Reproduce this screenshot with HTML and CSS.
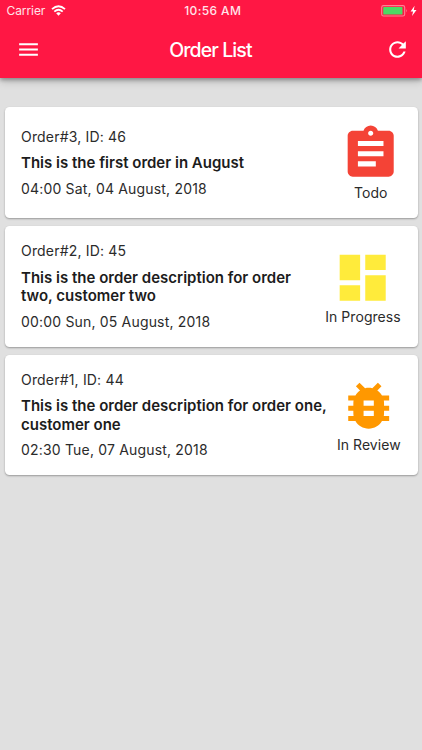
FILE: index.html
```html
<!DOCTYPE html>
<html lang="en">
<head>
<meta charset="utf-8">
<title>Order List</title>
<link rel="stylesheet" href="styles.css">
</head>
<body>
<header class="header">
  <div class="status">
    <div class="carrier"><span>Carrier</span>
      <svg class="wifi" viewBox="0 0 15 11"><path d="M1 4.2Q7.5-1.7 14 4.2M3.3 6.6Q7.5 2.8 11.7 6.6" fill="none" stroke="currentColor" stroke-width="1.8"/><path d="M5.2 8.3Q7.5 6.3 9.8 8.3L7.5 10.7z" fill="currentColor"/></svg>
    </div>
    <span class="time">10:56 AM</span>
    <svg class="battery" viewBox="0 0 37 12"><rect x=".7" y=".6" width="23" height="10.4" rx="1.8" fill="none" stroke="#ff8095" stroke-width="1.1"/><rect x="2.2" y="2.1" width="19.3" height="7.4" rx=".6" fill="#4cd964"/><path d="M25.3 4.1q1.6 1.7 0 3.4z" fill="#ff8095"/><path d="M33.6.7 29.6 6.6h2.5L31 11l4.5-6.1h-2.7z" fill="#fff"/></svg>
  </div>
  <nav class="bar">
    <svg class="nav-icon" viewBox="0 0 24 24"><path d="M3 18h18v-2H3v2zm0-5h18v-2H3v2zm0-7v2h18V6H3z"/></svg>
    <h1 class="title">Order List</h1>
    <svg class="nav-icon" viewBox="0 0 24 24"><path d="M17.65 6.35C16.2 4.9 14.21 4 12 4c-4.42 0-7.99 3.58-7.99 8s3.57 8 7.99 8c3.73 0 6.84-2.55 7.73-6h-2.08c-.82 2.33-3.04 4-5.65 4-3.31 0-6-2.69-6-6s2.69-6 6-6c1.66 0 3.14.69 4.22 1.78L13 11h7V4l-2.35 2.35z"/></svg>
  </nav>
</header>
<main class="list">
  <article class="card card-short">
    <div class="info">
      <p class="meta">Order#3, ID: 46</p>
      <h2 class="desc">This is the first order in August</h2>
      <p class="meta date">04:00 Sat, 04 August, 2018</p>
    </div>
    <div class="state todo">
      <svg class="state-icon" viewBox="0 0 24 24"><path d="M19 3h-4.18C14.4 1.84 13.3 1 12 1c-1.3 0-2.4.84-2.82 2H5c-1.1 0-2 .9-2 2v14c0 1.1.9 2 2 2h14c1.1 0 2-.9 2-2V5c0-1.1-.9-2-2-2zm-7 0c.55 0 1 .45 1 1s-.45 1-1 1-1-.45-1-1 .45-1 1-1zm2 14H7v-2h7v2zm3-4H7v-2h10v2zm0-4H7V7h10v2z"/></svg>
      <span class="label">Todo</span>
    </div>
  </article>
  <article class="card">
    <div class="info">
      <p class="meta">Order#2, ID: 45</p>
      <h2 class="desc">This is the order description for order<br>two, customer two</h2>
      <p class="meta date">00:00 Sun, 05 August, 2018</p>
    </div>
    <div class="state progress">
      <svg class="state-icon" viewBox="0 0 24 24"><path d="M3 13h8V3H3v10zm0 8h8v-6H3v6zm10 0h8V11h-8v10zm0-18v6h8V3h-8z"/></svg>
      <span class="label">In Progress</span>
    </div>
  </article>
  <article class="card">
    <div class="info">
      <p class="meta">Order#1, ID: 44</p>
      <h2 class="desc">This is the order description for order one,<br>customer one</h2>
      <p class="meta date">02:30 Tue, 07 August, 2018</p>
    </div>
    <div class="state review">
      <svg class="state-icon" viewBox="0 0 24 24"><path d="M20 8h-2.81c-.45-.78-1.07-1.45-1.82-1.96L17 4.41 15.59 3l-2.17 2.17C12.96 5.06 12.49 5 12 5c-.49 0-.96.06-1.41.17L8.41 3 7 4.41l1.62 1.63C7.88 6.55 7.26 7.22 6.81 8H4v2h2.09c-.05.33-.09.66-.09 1v1H4v2h2v1c0 .34.04.67.09 1H4v2h2.81c1.04 1.79 2.97 3 5.19 3s4.15-1.21 5.19-3H20v-2h-2.09c.05-.33.09-.66.09-1v-1h2v-2h-2v-1c0-.34-.04-.67-.09-1H20V8zm-6 8h-4v-2h4v2zm0-4h-4v-2h4v2z"/></svg>
      <span class="label">In Review</span>
    </div>
  </article>
</main>
</body>
</html>
```
FILE: styles.css
```css
* { box-sizing: border-box; }
body {
  margin: 0;
  min-height: 750px;
  background: #e0e0e0;
  color: #2b2b2b;
  font-family: Inter, "Liberation Sans", sans-serif;
}
h1, h2, p { margin: 0; }
svg { display: block; flex: none; }
.header {
  height: 77.6px;
  background: #ff1744;
  color: #fff;
  box-shadow: 0 2px 4px rgba(0, 0, 0, .3), 0 3px 9px rgba(0, 0, 0, .18);
}
.status {
  display: grid;
  grid-template-columns: 1fr auto 1fr;
  align-items: center;
  height: 21px;
  padding: 0 4px 0 6.5px;
  color: #ffe4e9;
}
.carrier { display: flex; align-items: center; gap: 6px; font-size: 12px; letter-spacing: -.08px; }
.wifi { width: 15px; height: 11px; color: #fff; }
.time { padding-left: 1px; font-size: 12px; font-weight: 500; letter-spacing: .4px; }
.battery { width: 37px; height: 12px; justify-self: end; }
.bar {
  display: flex;
  align-items: center;
  justify-content: space-between;
  height: 57px;
  padding: 0 12px 0 16px;
}
.nav-icon { width: 25px; height: 25px; fill: #fff; }
.title { margin-right: 5px; font-size: 19.5px; font-weight: 500; letter-spacing: -.9px; }
.list { display: flex; flex-direction: column; gap: 8px; padding: 29.6px 4.5px 0; }
.card {
  display: flex;
  justify-content: space-between;
  align-items: center;
  height: 120.4px;
  padding: 0 16px 0 16.5px;
  border-radius: 4.5px;
  background: #fff;
  box-shadow: 0 1px 2px rgba(0, 0, 0, .32);
}
.card-short { height: 111px; }
.info { padding-top: .8px; white-space: nowrap; }
.meta { font-size: 14px; line-height: 18px; letter-spacing: .18px; }
.desc {
  margin: 8.4px 0 7px;
  color: #1c1c1c;
  font-size: 15px;
  font-weight: 600;
  line-height: 18.6px;
  letter-spacing: 0;
}
.state { display: flex; flex-direction: column; align-items: center; }
.state-icon { width: 61.4px; height: 61.4px; fill: currentColor; }
.label { color: #2b2b2b; font-size: 14px; line-height: 18px; letter-spacing: .05px; white-space: nowrap; }
.todo { color: #f44336; }
.progress { color: #ffeb3b; }
.progress, .review { margin-right: .8px; }
.review { color: #ff9800; }
```
